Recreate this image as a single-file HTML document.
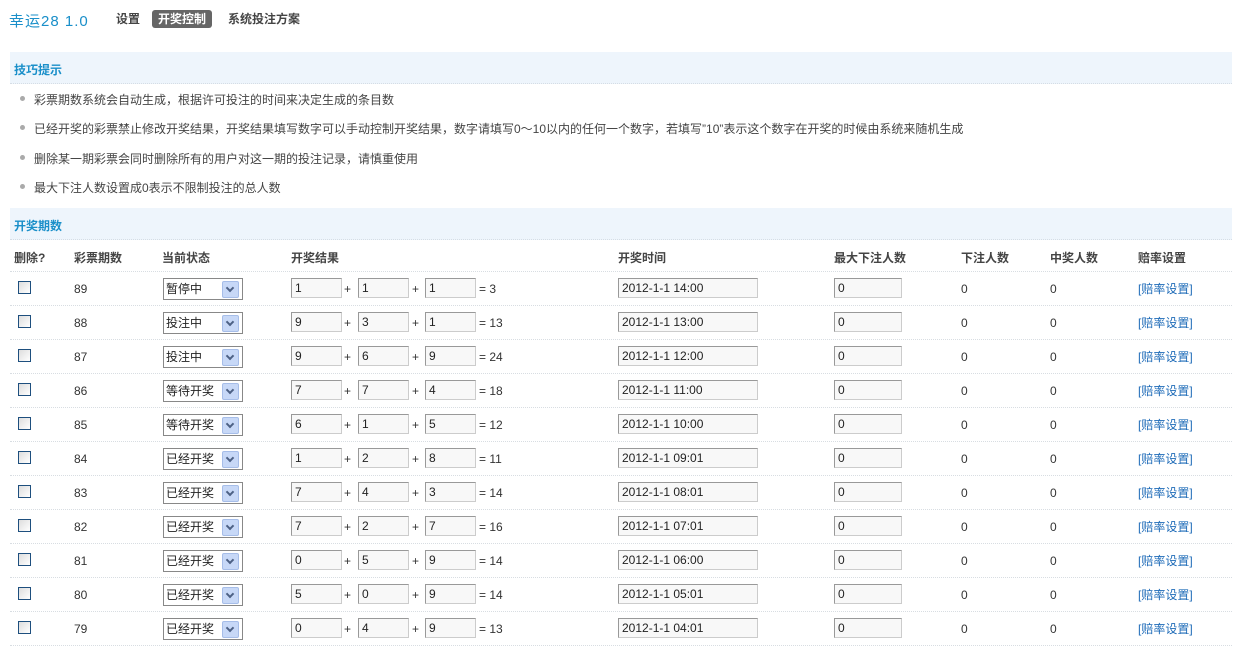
<!DOCTYPE html><html><head><meta charset="utf-8"><style>
body{margin:0;width:1233px;height:648px;overflow:hidden;background:#fff;font-family:"Liberation Sans","Noto Sans CJK SC",sans-serif;font-size:12px;color:#333;position:relative}
.a{position:absolute;white-space:nowrap}
.logo{left:9px;top:10px;font-size:15px;color:#1a8fc9;letter-spacing:1px}
.nav{top:10px;font-size:12px;font-weight:bold;color:#444;line-height:18px}
.act{background:#666;color:#fff;border-radius:3px;padding:0 6px;left:152px}
.sec{left:10px;width:1222px;height:31px;background:#eef5fc;border-bottom:1px dotted #d5dde5}
.sec b{position:absolute;left:4px;top:9px;color:#1a8fc9;font-size:12px}
.tip{left:34px;font-size:12px;color:#444}
.dot{left:20px;width:5px;height:5px;border-radius:50%;background:#aaa}
.row{position:absolute;left:10px;width:1222px;height:33px;border-bottom:1px dotted #d8dde2}
.row .a{top:10px}
.row .lk{top:8px}
.h .a{font-weight:bold;color:#444;top:9px}
.cb{left:8px!important;top:9px!important;width:11px;height:11px;border:1px solid #1e4f7e;background:linear-gradient(135deg,#ddd,#fff)}
.sel{left:153px!important;top:6px!important;width:76px;height:20px;border:1px solid #888;font-size:12px;line-height:20px;padding-left:2px;color:#222}
.sel i{position:absolute;right:3px;top:2px;width:15px;height:15px;background:#c7d8f7;border:1px solid #a6bde8;border-radius:2px}
.sel i:after{content:"";position:absolute;left:4px;top:3px;width:4px;height:4px;border-right:2px solid #4d6185;border-bottom:2px solid #4d6185;transform:rotate(45deg)}
.in{top:6px!important;height:18px;border:1px solid #999;border-right-color:#ccc;border-bottom-color:#ccc;background:#f8f8f8;font-size:12px;line-height:18px;padding-left:3px;color:#222}
.lk{color:#1e6bb8;left:1128px}
</style></head><body>
<div class="a logo">幸运28 1.0</div>
<div class="a nav" style="left:116px">设置</div>
<div class="a nav act">开奖控制</div>
<div class="a nav" style="left:228px">系统投注方案</div>
<div class="a sec" style="top:52px"><b>技巧提示</b></div>
<div class="a dot" style="top:96px"></div><div class="a tip" style="top:91px">彩票期数系统会自动生成，根据许可投注的时间来决定生成的条目数</div>
<div class="a dot" style="top:125px"></div><div class="a tip" style="top:120px">已经开奖的彩票禁止修改开奖结果，开奖结果填写数字可以手动控制开奖结果，数字请填写0～10以内的任何一个数字，若填写”10”表示这个数字在开奖的时候由系统来随机生成</div>
<div class="a dot" style="top:155px"></div><div class="a tip" style="top:150px">删除某一期彩票会同时删除所有的用户对这一期的投注记录，请慎重使用</div>
<div class="a dot" style="top:184px"></div><div class="a tip" style="top:179px">最大下注人数设置成0表示不限制投注的总人数</div>
<div class="a sec" style="top:208px"><b>开奖期数</b></div>
<div class="row h" style="top:240px;height:31px"><span class="a" style="left:4px">删除?</span><span class="a" style="left:64px">彩票期数</span><span class="a" style="left:152px">当前状态</span><span class="a" style="left:281px">开奖结果</span><span class="a" style="left:608px">开奖时间</span><span class="a" style="left:824px">最大下注人数</span><span class="a" style="left:951px">下注人数</span><span class="a" style="left:1040px">中奖人数</span><span class="a" style="left:1128px">赔率设置</span></div>

<div class="row" style="top:272px"><span class="a cb"></span><span class="a" style="left:64px">89</span><span class="a sel">暂停中<i></i></span><span class="a in" style="left:281px;width:46px">1</span><span class="a" style="left:334px">+</span><span class="a in" style="left:348px;width:46px">1</span><span class="a" style="left:402px">+</span><span class="a in" style="left:415px;width:46px">1</span><span class="a" style="left:469px">= 3</span><span class="a in" style="left:608px;width:135px">2012-1-1 14:00</span><span class="a in" style="left:824px;width:63px">0</span><span class="a" style="left:951px">0</span><span class="a" style="left:1040px">0</span><span class="a lk">[赔率设置]</span></div>
<div class="row" style="top:306px"><span class="a cb"></span><span class="a" style="left:64px">88</span><span class="a sel">投注中<i></i></span><span class="a in" style="left:281px;width:46px">9</span><span class="a" style="left:334px">+</span><span class="a in" style="left:348px;width:46px">3</span><span class="a" style="left:402px">+</span><span class="a in" style="left:415px;width:46px">1</span><span class="a" style="left:469px">= 13</span><span class="a in" style="left:608px;width:135px">2012-1-1 13:00</span><span class="a in" style="left:824px;width:63px">0</span><span class="a" style="left:951px">0</span><span class="a" style="left:1040px">0</span><span class="a lk">[赔率设置]</span></div>
<div class="row" style="top:340px"><span class="a cb"></span><span class="a" style="left:64px">87</span><span class="a sel">投注中<i></i></span><span class="a in" style="left:281px;width:46px">9</span><span class="a" style="left:334px">+</span><span class="a in" style="left:348px;width:46px">6</span><span class="a" style="left:402px">+</span><span class="a in" style="left:415px;width:46px">9</span><span class="a" style="left:469px">= 24</span><span class="a in" style="left:608px;width:135px">2012-1-1 12:00</span><span class="a in" style="left:824px;width:63px">0</span><span class="a" style="left:951px">0</span><span class="a" style="left:1040px">0</span><span class="a lk">[赔率设置]</span></div>
<div class="row" style="top:374px"><span class="a cb"></span><span class="a" style="left:64px">86</span><span class="a sel">等待开奖<i></i></span><span class="a in" style="left:281px;width:46px">7</span><span class="a" style="left:334px">+</span><span class="a in" style="left:348px;width:46px">7</span><span class="a" style="left:402px">+</span><span class="a in" style="left:415px;width:46px">4</span><span class="a" style="left:469px">= 18</span><span class="a in" style="left:608px;width:135px">2012-1-1 11:00</span><span class="a in" style="left:824px;width:63px">0</span><span class="a" style="left:951px">0</span><span class="a" style="left:1040px">0</span><span class="a lk">[赔率设置]</span></div>
<div class="row" style="top:408px"><span class="a cb"></span><span class="a" style="left:64px">85</span><span class="a sel">等待开奖<i></i></span><span class="a in" style="left:281px;width:46px">6</span><span class="a" style="left:334px">+</span><span class="a in" style="left:348px;width:46px">1</span><span class="a" style="left:402px">+</span><span class="a in" style="left:415px;width:46px">5</span><span class="a" style="left:469px">= 12</span><span class="a in" style="left:608px;width:135px">2012-1-1 10:00</span><span class="a in" style="left:824px;width:63px">0</span><span class="a" style="left:951px">0</span><span class="a" style="left:1040px">0</span><span class="a lk">[赔率设置]</span></div>
<div class="row" style="top:442px"><span class="a cb"></span><span class="a" style="left:64px">84</span><span class="a sel">已经开奖<i></i></span><span class="a in" style="left:281px;width:46px">1</span><span class="a" style="left:334px">+</span><span class="a in" style="left:348px;width:46px">2</span><span class="a" style="left:402px">+</span><span class="a in" style="left:415px;width:46px">8</span><span class="a" style="left:469px">= 11</span><span class="a in" style="left:608px;width:135px">2012-1-1 09:01</span><span class="a in" style="left:824px;width:63px">0</span><span class="a" style="left:951px">0</span><span class="a" style="left:1040px">0</span><span class="a lk">[赔率设置]</span></div>
<div class="row" style="top:476px"><span class="a cb"></span><span class="a" style="left:64px">83</span><span class="a sel">已经开奖<i></i></span><span class="a in" style="left:281px;width:46px">7</span><span class="a" style="left:334px">+</span><span class="a in" style="left:348px;width:46px">4</span><span class="a" style="left:402px">+</span><span class="a in" style="left:415px;width:46px">3</span><span class="a" style="left:469px">= 14</span><span class="a in" style="left:608px;width:135px">2012-1-1 08:01</span><span class="a in" style="left:824px;width:63px">0</span><span class="a" style="left:951px">0</span><span class="a" style="left:1040px">0</span><span class="a lk">[赔率设置]</span></div>
<div class="row" style="top:510px"><span class="a cb"></span><span class="a" style="left:64px">82</span><span class="a sel">已经开奖<i></i></span><span class="a in" style="left:281px;width:46px">7</span><span class="a" style="left:334px">+</span><span class="a in" style="left:348px;width:46px">2</span><span class="a" style="left:402px">+</span><span class="a in" style="left:415px;width:46px">7</span><span class="a" style="left:469px">= 16</span><span class="a in" style="left:608px;width:135px">2012-1-1 07:01</span><span class="a in" style="left:824px;width:63px">0</span><span class="a" style="left:951px">0</span><span class="a" style="left:1040px">0</span><span class="a lk">[赔率设置]</span></div>
<div class="row" style="top:544px"><span class="a cb"></span><span class="a" style="left:64px">81</span><span class="a sel">已经开奖<i></i></span><span class="a in" style="left:281px;width:46px">0</span><span class="a" style="left:334px">+</span><span class="a in" style="left:348px;width:46px">5</span><span class="a" style="left:402px">+</span><span class="a in" style="left:415px;width:46px">9</span><span class="a" style="left:469px">= 14</span><span class="a in" style="left:608px;width:135px">2012-1-1 06:00</span><span class="a in" style="left:824px;width:63px">0</span><span class="a" style="left:951px">0</span><span class="a" style="left:1040px">0</span><span class="a lk">[赔率设置]</span></div>
<div class="row" style="top:578px"><span class="a cb"></span><span class="a" style="left:64px">80</span><span class="a sel">已经开奖<i></i></span><span class="a in" style="left:281px;width:46px">5</span><span class="a" style="left:334px">+</span><span class="a in" style="left:348px;width:46px">0</span><span class="a" style="left:402px">+</span><span class="a in" style="left:415px;width:46px">9</span><span class="a" style="left:469px">= 14</span><span class="a in" style="left:608px;width:135px">2012-1-1 05:01</span><span class="a in" style="left:824px;width:63px">0</span><span class="a" style="left:951px">0</span><span class="a" style="left:1040px">0</span><span class="a lk">[赔率设置]</span></div>
<div class="row" style="top:612px"><span class="a cb"></span><span class="a" style="left:64px">79</span><span class="a sel">已经开奖<i></i></span><span class="a in" style="left:281px;width:46px">0</span><span class="a" style="left:334px">+</span><span class="a in" style="left:348px;width:46px">4</span><span class="a" style="left:402px">+</span><span class="a in" style="left:415px;width:46px">9</span><span class="a" style="left:469px">= 13</span><span class="a in" style="left:608px;width:135px">2012-1-1 04:01</span><span class="a in" style="left:824px;width:63px">0</span><span class="a" style="left:951px">0</span><span class="a" style="left:1040px">0</span><span class="a lk">[赔率设置]</span></div>
</body></html>
